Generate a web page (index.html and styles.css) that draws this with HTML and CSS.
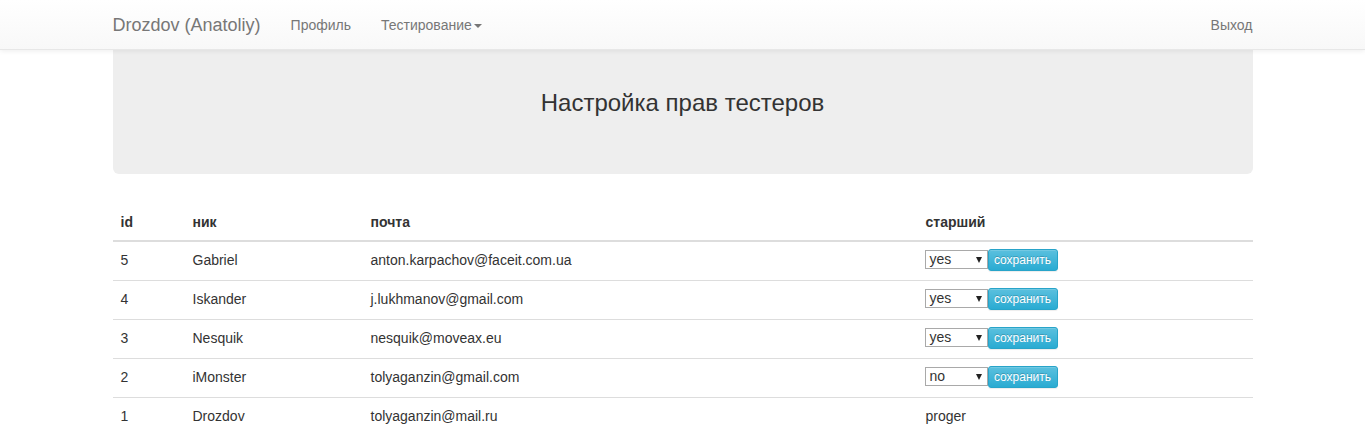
FILE: index.html
```html
<!DOCTYPE html>
<html lang="ru">
<head>
<meta charset="utf-8">
<title>Настройка прав тестеров</title>
<link rel="stylesheet" href="styles.css">
</head>
<body>
<nav class="navbar">
  <div class="container nav-inner">
    <a class="brand" href="#">Drozdov (Anatoliy)</a>
    <ul class="nav">
      <li><a href="#">Профиль</a></li>
      <li><a href="#">Тестирование<span class="caret"></span></a></li>
    </ul>
    <ul class="nav nav-right">
      <li><a href="#">Выход</a></li>
    </ul>
  </div>
</nav>
<main class="container">
  <div class="jumbotron">
    <h3>Настройка прав тестеров</h3>
  </div>
  <table class="table">
    <thead>
      <tr><th class="c-id">id</th><th class="c-nick">ник</th><th class="c-mail">почта</th><th>старший</th></tr>
    </thead>
    <tbody>
      <tr><td>5</td><td>Gabriel</td><td>anton.karpachov@faceit.com.ua</td><td><div class="ctrl"><span class="sel">yes</span><button class="btn">сохранить</button></div></td></tr>
      <tr><td>4</td><td>Iskander</td><td>j.lukhmanov@gmail.com</td><td><div class="ctrl"><span class="sel">yes</span><button class="btn">сохранить</button></div></td></tr>
      <tr><td>3</td><td>Nesquik</td><td>nesquik@moveax.eu</td><td><div class="ctrl"><span class="sel">yes</span><button class="btn">сохранить</button></div></td></tr>
      <tr><td>2</td><td>iMonster</td><td>tolyaganzin@gmail.com</td><td><div class="ctrl"><span class="sel">no</span><button class="btn">сохранить</button></div></td></tr>
      <tr><td>1</td><td>Drozdov</td><td>tolyaganzin@mail.ru</td><td>proger</td></tr>
    </tbody>
  </table>
</main>
</body>
</html>
```

FILE: styles.css
```css
* { box-sizing: border-box; }
html, body { margin: 0; padding: 0; }
body {
  font-family: "Liberation Sans", Arial, Helvetica, sans-serif;
  font-size: 14px;
  line-height: 1.42857;
  color: #333;
  background: #fff;
}
a { text-decoration: none; }
.container {
  width: 1170px;
  margin: 0 auto;
  padding: 0 15px;
}
.navbar {
  height: 50px;
  background: linear-gradient(to bottom, #ffffff 0%, #f8f8f8 100%);
  border-bottom: 1px solid #e7e7e7;
  box-shadow: 0 1px 5px rgba(0,0,0,0.075), inset 0 1px 0 rgba(255,255,255,0.15);
  position: relative;
  z-index: 2;
}
.nav-inner {
  display: flex;
  align-items: stretch;
  height: 49px;
}
.brand {
  font-size: 18px;
  line-height: 20px;
  padding: 15px;
  margin-left: -15px;
  color: #777;
  text-shadow: 0 1px 0 rgba(255,255,255,0.25);
}
.nav {
  list-style: none;
  margin: 0;
  padding: 0;
  display: flex;
}
.nav a {
  display: block;
  padding: 15px;
  line-height: 20px;
  color: #777;
  text-shadow: 0 1px 0 rgba(255,255,255,0.25);
}
.nav-right { margin-left: auto; margin-right: -15px; }
.caret {
  display: inline-block;
  width: 0;
  height: 0;
  margin-left: 2px;
  vertical-align: middle;
  border-top: 4px solid #777;
  border-left: 4px solid transparent;
  border-right: 4px solid transparent;
}
.jumbotron {
  background: #eee;
  border-radius: 0 0 6px 6px;
  padding: 40px 15px 58px;
  margin-bottom: 30px;
  text-align: center;
}
.jumbotron h3 {
  margin: 0;
  font-size: 24px;
  font-weight: 500;
  line-height: 26px;
}
.table {
  width: 100%;
  border-collapse: collapse;
  border-spacing: 0;
}
.table th, .table td {
  padding: 8px;
  line-height: 20px;
  text-align: left;
  vertical-align: top;
}
.table th {
  font-weight: bold;
  border-bottom: 2px solid #ddd;
  vertical-align: bottom;
}
.table td { border-top: 1px solid #ddd; }
.table tbody tr:first-child td { border-top: 0; }
.c-id { width: 72px; }
.c-nick { width: 178px; }
.c-mail { width: 555px; }
.ctrl {
  display: flex;
  align-items: flex-start;
  margin-left: -1px;
  height: 22px;
}
.sel {
  position: relative;
  width: 63px;
  height: 19px;
  border: 1px solid #a9a9a9;
  background: #fff;
  font-size: 14px;
  line-height: 17px;
  padding-left: 4px;
  color: #333;
}
.sel::after {
  content: "";
  position: absolute;
  right: 5px;
  top: 6px;
  border-top: 6px solid #222;
  border-left: 3.5px solid transparent;
  border-right: 3.5px solid transparent;
}
.btn {
  font-family: "Liberation Sans", Arial, sans-serif;
  font-size: 12px;
  line-height: 18px;
  height: 22px;
  padding: 1px 5px;
  color: #fff;
  border: 1px solid #28a4c9;
  border-radius: 3px;
  background: linear-gradient(to bottom, #5bc0de 0%, #2aabd2 100%);
  text-shadow: 0 -1px 0 rgba(0,0,0,0.2);
  box-shadow: inset 0 1px 0 rgba(255,255,255,0.15), 0 1px 1px rgba(0,0,0,0.075);
  width: 70px;
  margin-top: -1px;
}
```
